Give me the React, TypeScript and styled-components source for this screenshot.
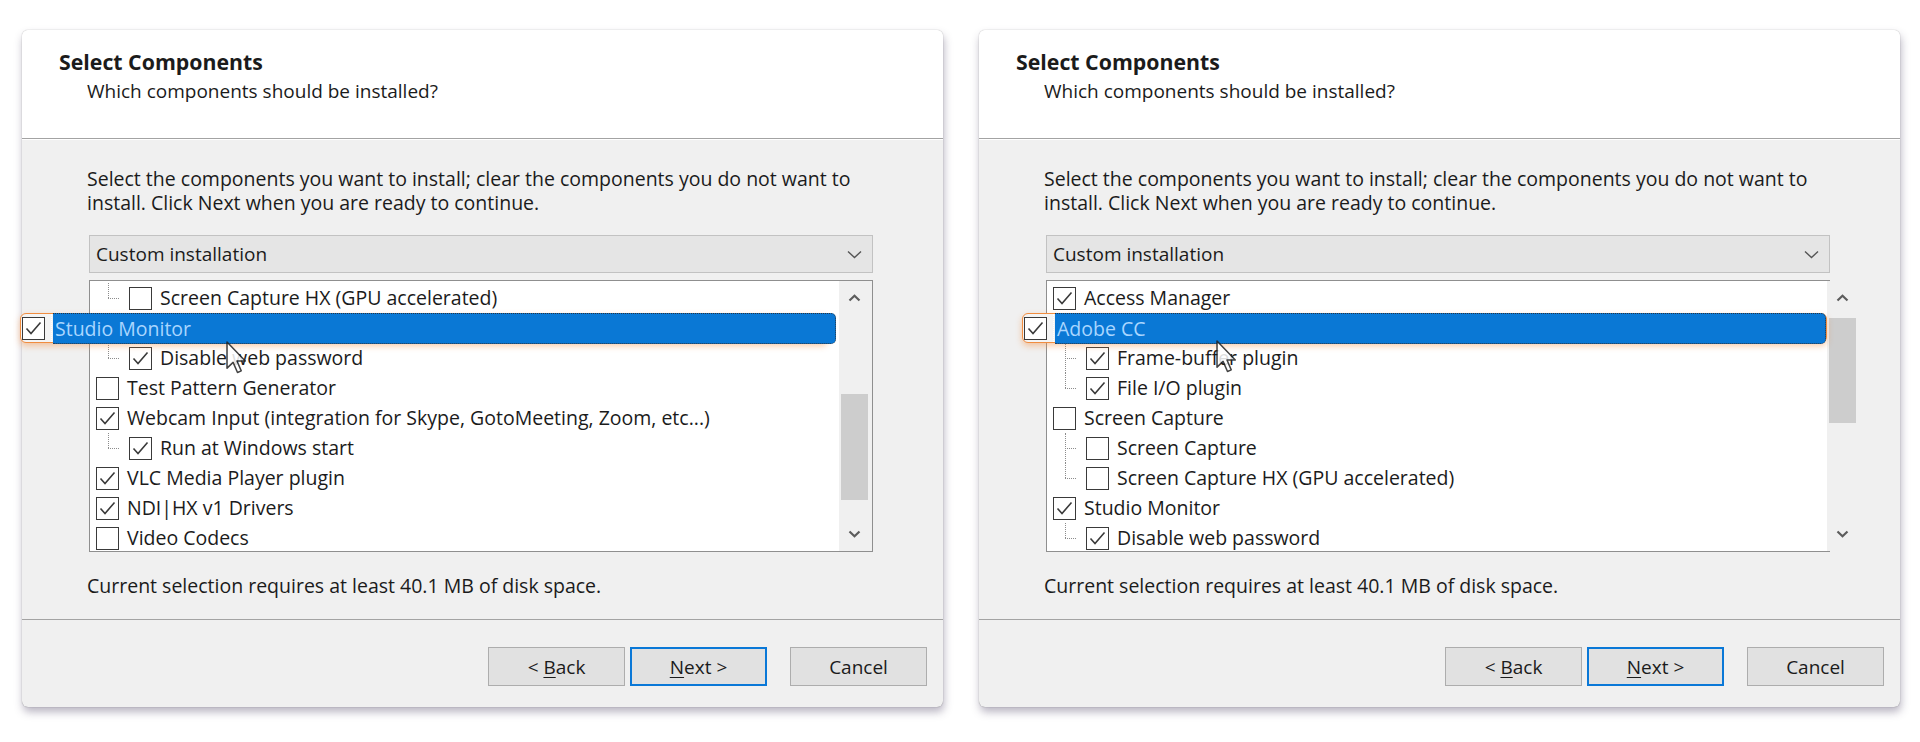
import React from 'react';
import styled, { createGlobalStyle } from 'styled-components';

const GlobalStyle = createGlobalStyle`
  body {
    margin: 0;
    background: #fff;
    font-family: 'Open Sans', 'Noto Sans', sans-serif;
  }
`;

const Page = styled.div`
  display: flex;
  gap: 36px;
  padding: 30px 0 0 22px;
  height: 742px;
  box-sizing: border-box;
  background: #fff;
`;

const Dialog = styled.div`
  position: relative;
  width: 921px;
  height: 677px;
  display: flex;
  flex-direction: column;
  background: #f0f0f0;
  border-radius: 6px;
  box-shadow: 0 0 1px rgba(0, 0, 0, 0.45), 1px 5px 9px rgba(70, 60, 95, 0.38);
  color: #1b1b1b;
  font-size: 19.5px;
`;

const Header = styled.div`
  height: 109px;
  box-sizing: border-box;
  padding: 19px 0 0 37px;
  background: #fff;
  border-radius: 6px 6px 0 0;
  border-bottom: 1px solid #a3a3a3;
`;

const Title = styled.div`
  font-weight: 700;
  font-size: 21.3px;
  line-height: 26px;
`;

const Subtitle = styled.div`
  margin-top: 3px;
  padding-left: 28px;
  font-size: 19px;
  line-height: 26px;
`;

const Body = styled.div`
  flex: 1;
  display: flex;
  flex-direction: column;
  padding: 27px 0 0 65px;
  border-top: 1px solid #fff;
`;

const Text = styled.div`
  line-height: 24px;
`;

const Combo = styled.div`
  margin: 20px 0 0 2px;
  width: 784px;
  height: 38px;
  box-sizing: border-box;
  display: flex;
  align-items: center;
  justify-content: space-between;
  padding: 0 10px 0 6px;
  background: #e5e5e5;
  border: 1px solid #c2c2c2;
  font-size: 19px;
`;

const ListBox = styled.div`
  margin: 7px 0 0 2px;
  width: 784px;
  height: 272px;
  box-sizing: border-box;
  display: flex;
  background: #fff;
  border: 1px solid #8f8f8f;
`;

const Rows = styled.div`
  flex: 1;
  padding-top: 2px;
  overflow-x: visible;
  overflow-y: clip;
`;

const Row = styled.div`
  height: 30px;
  display: flex;
  align-items: center;
  padding-left: 6px;
`;

const Guide = styled.span<{ $last: boolean }>`
  position: relative;
  align-self: stretch;
  width: 33px;
  flex-shrink: 0;

  &::before {
    content: '';
    position: absolute;
    left: 12px;
    top: 0;
    height: ${p => (p.$last ? '50%' : '100%')};
    border-left: 1px dotted #8c8c8c;
  }

  &::after {
    content: '';
    position: absolute;
    left: 12px;
    top: 50%;
    width: 11px;
    border-top: 1px dotted #8c8c8c;
  }
`;

const Box = styled.span`
  width: 23px;
  height: 23px;
  box-sizing: border-box;
  flex-shrink: 0;
  border: 1.5px solid #3a3a3a;
  background: #fff;
  display: flex;
  align-items: center;
  justify-content: center;
`;

const Label = styled.span`
  margin-left: 8px;
  white-space: nowrap;
  line-height: 30px;
`;

const Lifted = styled.div<{ $shift: number; $width: number }>`
  position: relative;
  z-index: 3;
  margin-left: ${p => p.$shift}px;
  width: ${p => p.$width}px;
  height: 30px;
  box-sizing: border-box;
  display: flex;
  border: 1.5px solid #f08d40;
  border-radius: 6px;
  background: #f4f4f4;
  box-shadow: 0 3px 6px rgba(245, 140, 60, 0.45);
`;

const LiftedCheck = styled.span`
  width: 29px;
  flex-shrink: 0;
  display: flex;
  align-items: center;
  padding-left: 1px;
  border-right: 1px dotted #fff;
`;

const LiftedBar = styled.span<{ $tail: number }>`
  flex: 1;
  margin: -1.5px ${p => -p.$tail}px -1.5px 1px;
  display: flex;
  align-items: center;
  padding-left: 2px;
  background: #0a78d5;
  border: 1px dotted #2b3440;
  border-left: none;
  border-radius: 0 5px 5px 0;
  color: #a9d6ff;
  white-space: nowrap;
`;

const ScrollBar = styled.div`
  width: 33px;
  flex-shrink: 0;
  display: flex;
  flex-direction: column;
  background: #f0f0f0;
`;

const Arrow = styled.div`
  height: 34px;
  display: flex;
  align-items: center;
  justify-content: center;
  padding-right: 2px;
`;

const Track = styled.div`
  flex: 1;
  display: flex;
  flex-direction: column;
  padding: 0 4px 0 2px;
`;

const Thumb = styled.div<{ $offset: number; $size: number }>`
  margin-top: ${p => p.$offset}px;
  height: ${p => p.$size}px;
  background: #cdcdcd;
`;

const Note = styled.div`
  margin-top: 22px;
  line-height: 24px;
`;

const Footer = styled.div`
  height: 88px;
  box-sizing: border-box;
  border-top: 1px solid #a3a3a3;
  display: flex;
  justify-content: flex-end;
  align-items: flex-start;
  padding: 27px 16px 0 0;
  font-size: 19px;
`;

const Button = styled.div<{ $primary?: boolean; $gap: number }>`
  width: 137px;
  height: 39px;
  box-sizing: border-box;
  margin-left: ${p => p.$gap}px;
  display: flex;
  align-items: center;
  justify-content: center;
  background: #e1e1e1;
  border: ${p => (p.$primary ? '2px solid #0a78d7' : '1px solid #adadad')};
  u {
    text-decoration-thickness: 1px;
    text-underline-offset: 3px;
  }
`;

const Cursor = styled.svg<{ $x: number; $y: number }>`
  position: absolute;
  left: ${p => p.$x}px;
  top: ${p => p.$y}px;
  z-index: 5;
  opacity: 0.85;
`;

type Item = {
  label: string;
  checked: boolean;
  child?: boolean;
  last?: boolean;
  lifted?: { shift: number; width: number; tail: number };
};

type Setup = {
  items: Item[];
  thumb: { offset: number; size: number };
  cursor: { x: number; y: number };
};

const Check = () => (
  <svg width="17" height="15" viewBox="0 0 17 15">
    <path d="M1.5 7.5 L6 12.5 L15.5 1.5" fill="none" stroke="#3a3a3a" strokeWidth="1.6" />
  </svg>
);

const CheckBox = ({ checked }: { checked: boolean }) => <Box>{checked && <Check />}</Box>;

const Chevron = ({ up }: { up?: boolean }) => (
  <svg width="13" height="8" viewBox="0 0 13 8">
    <path
      d={up ? 'M1.5 6.5 L6.5 1.8 L11.5 6.5' : 'M1.5 1.5 L6.5 6.2 L11.5 1.5'}
      fill="none"
      stroke="#5c5c5c"
      strokeWidth="2.2"
    />
  </svg>
);

const left: Setup = {
  items: [
    { label: 'Screen Capture HX (GPU accelerated)', checked: false, child: true, last: true },
    { label: 'Studio Monitor', checked: true, lifted: { shift: -70, width: 808, tail: 9 } },
    { label: 'Disable web password', checked: true, child: true, last: true },
    { label: 'Test Pattern Generator', checked: false },
    { label: 'Webcam Input (integration for Skype, GotoMeeting, Zoom, etc...)', checked: true },
    { label: 'Run at Windows start', checked: true, child: true, last: true },
    { label: 'VLC Media Player plugin', checked: true },
    { label: 'NDI|HX v1 Drivers', checked: true },
    { label: 'Video Codecs', checked: false },
  ],
  thumb: { offset: 79, size: 106 },
  cursor: { x: 204, y: 311 },
};

const right: Setup = {
  items: [
    { label: 'Access Manager', checked: true },
    { label: 'Adobe CC', checked: true, lifted: { shift: -25, width: 805, tail: 0 } },
    { label: 'Frame-buffer plugin', checked: true, child: true },
    { label: 'File I/O plugin', checked: true, child: true, last: true },
    { label: 'Screen Capture', checked: false },
    { label: 'Screen Capture', checked: false, child: true },
    { label: 'Screen Capture HX (GPU accelerated)', checked: false, child: true, last: true },
    { label: 'Studio Monitor', checked: true },
    { label: 'Disable web password', checked: true, child: true, last: true },
  ],
  thumb: { offset: 3, size: 105 },
  cursor: { x: 237, y: 310 },
};

const ComponentRow = ({ item }: { item: Item }) => {
  if (item.lifted) {
    const { shift, width, tail } = item.lifted;
    return (
      <Row>
        <Lifted $shift={shift - 6} $width={width}>
          <LiftedCheck>
            <CheckBox checked={item.checked} />
          </LiftedCheck>
          <LiftedBar $tail={tail}>{item.label}</LiftedBar>
        </Lifted>
      </Row>
    );
  }
  return (
    <Row>
      {item.child && <Guide $last={!!item.last} />}
      <CheckBox checked={item.checked} />
      <Label>{item.label}</Label>
    </Row>
  );
};

const SetupDialog = ({ setup }: { setup: Setup }) => (
  <Dialog>
    <Header>
      <Title>Select Components</Title>
      <Subtitle>Which components should be installed?</Subtitle>
    </Header>
    <Body>
      <Text>
        Select the components you want to install; clear the components you do not want to
        <br />
        install. Click Next when you are ready to continue.
      </Text>
      <Combo>
        <span>Custom installation</span>
        <svg width="15" height="9" viewBox="0 0 15 9">
          <path d="M1 1.5 L7.5 7.5 L14 1.5" fill="none" stroke="#555" strokeWidth="1.4" />
        </svg>
      </Combo>
      <ListBox>
        <Rows>
          {setup.items.map((item, i) => (
            <ComponentRow key={i} item={item} />
          ))}
        </Rows>
        <ScrollBar>
          <Arrow>
            <Chevron up />
          </Arrow>
          <Track>
            <Thumb $offset={setup.thumb.offset} $size={setup.thumb.size} />
          </Track>
          <Arrow>
            <Chevron />
          </Arrow>
        </ScrollBar>
      </ListBox>
      <Note>Current selection requires at least 40.1 MB of disk space.</Note>
    </Body>
    <Footer>
      <Button $gap={0}>
        &lt;&nbsp;<u>B</u>ack
      </Button>
      <Button $gap={5} $primary>
        <u>N</u>ext &gt;
      </Button>
      <Button $gap={23}>Cancel</Button>
    </Footer>
    <Cursor $x={setup.cursor.x} $y={setup.cursor.y} width="22" height="34" viewBox="0 0 13 20">
      <path
        d="M0.6 0.6 L0.6 16 L4.2 12.6 L6.8 18.6 L9 17.6 L6.5 11.8 L11.4 11.8 Z"
        fill="#fff"
        stroke="#222"
        strokeWidth="0.9"
        strokeLinejoin="round"
      />
    </Cursor>
  </Dialog>
);

export default function App() {
  return (
    <>
      <GlobalStyle />
      <Page>
        <SetupDialog setup={left} />
        <SetupDialog setup={right} />
      </Page>
    </>
  );
}
